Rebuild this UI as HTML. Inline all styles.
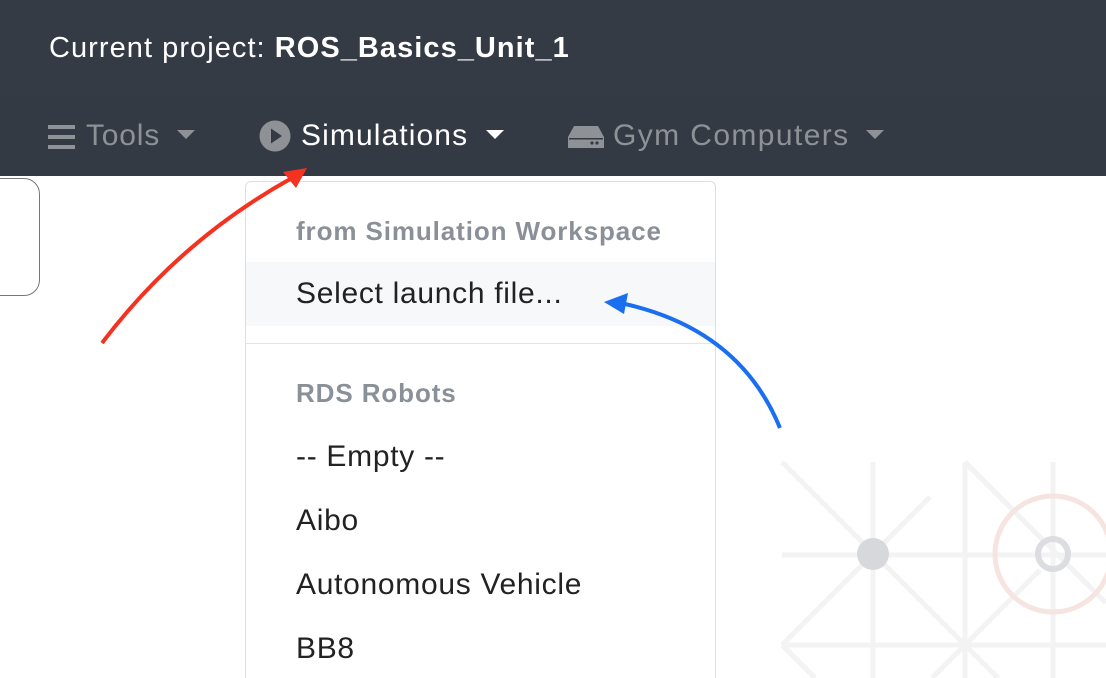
<!DOCTYPE html>
<html><head><style>
html,body{margin:0;width:1106px;height:678px;overflow:hidden}
body{background:#fff;font-family:"Liberation Sans",sans-serif;position:relative}
.top{position:absolute;left:0;top:0;width:1106px;height:96px;background:#353b45}
.nav{position:absolute;left:0;top:96px;width:1106px;height:80px;background:#343a43}
.t{position:absolute;white-space:nowrap}
.dd{position:absolute;left:245px;top:181px;width:469px;height:520px;border:1px solid #dcdfe3;border-radius:6px;background:#fff}
.hd{position:absolute;left:50px;font-size:26px;font-weight:bold;color:#8a9098;letter-spacing:0.9px}
.it{position:absolute;left:50px;font-size:30px;color:#222;letter-spacing:0.7px}
</style></head><body>
<svg style="position:absolute;left:0;top:0" width="1106" height="678">
<g stroke="#f3f3f4" stroke-width="5" fill="none">
<line x1="873" y1="462" x2="873" y2="678"/><line x1="1053" y1="462" x2="1053" y2="678"/><line x1="965" y1="462" x2="965" y2="678"/>
<line x1="782" y1="555" x2="1106" y2="555"/><line x1="782" y1="645" x2="1106" y2="645"/>
<line x1="782" y1="462" x2="965" y2="645"/><line x1="965" y1="462" x2="1106" y2="603"/>
<line x1="782" y1="645" x2="930" y2="497"/><line x1="965" y1="645" x2="1040" y2="570"/>
<line x1="782" y1="645" x2="815" y2="678"/><line x1="965" y1="645" x2="998" y2="678"/><line x1="965" y1="645" x2="932" y2="678"/>
</g>
<circle cx="1053" cy="554" r="58" stroke="#f6e4e1" stroke-width="5" fill="none"/>
<circle cx="873" cy="554" r="16" fill="#d6d8dc"/>
<circle cx="1053" cy="554" r="15" stroke="#dcdde0" stroke-width="6" fill="none"/>
</svg>
<div class="top"></div><div class="nav"></div>
<div class="t" style="left:49px;top:32px;font-size:29px;color:#fff;letter-spacing:1.05px">Current project: <b>ROS_Basics_Unit_1</b></div>
<svg style="position:absolute;left:48px;top:124px" width="28" height="26"><g fill="#8e9297"><rect y="1" width="27" height="4"/><rect y="11" width="27" height="4"/><rect y="21" width="27" height="4"/></g></svg>
<div class="t" style="left:86px;top:119px;font-size:30px;color:#8e9297;letter-spacing:0.8px">Tools</div>
<svg style="position:absolute;left:177px;top:130px" width="18" height="10"><path d="M0 0H18L9 9Z" fill="#8e9297"/></svg>
<svg style="position:absolute;left:259px;top:120px" width="32" height="32"><circle cx="16" cy="16" r="15.5" fill="#8e9297"/><path d="M12 8.5L23 16L12 23.5Z" fill="#343a43"/></svg>
<div class="t" style="left:301px;top:119px;font-size:30px;color:#fff;letter-spacing:1.1px">Simulations</div>
<svg style="position:absolute;left:486px;top:130px" width="18" height="10"><path d="M0 0H18L9 9Z" fill="#fff"/></svg>
<svg style="position:absolute;left:567px;top:124px" width="38" height="26"><path d="M7 2H31L37 13V24H1V13Z" fill="#8e9297"/><rect x="2" y="14" width="34" height="1.5" fill="#343a43"/><circle cx="30" cy="19" r="1.6" fill="#343a43"/><circle cx="25" cy="19" r="1.6" fill="#343a43"/></svg>
<div class="t" style="left:613px;top:119px;font-size:30px;color:#8e9297;letter-spacing:1.4px">Gym Computers</div>
<svg style="position:absolute;left:866px;top:130px" width="18" height="10"><path d="M0 0H18L9 9Z" fill="#8e9297"/></svg>
<div style="position:absolute;left:-30px;top:178px;width:68px;height:116px;border:1.5px solid #777;border-radius:16px;background:#fff"></div>
<div class="dd">
<div class="hd t" style="top:34px">from Simulation Workspace</div>
<div style="position:absolute;left:0;top:80px;width:469px;height:64px;background:#f7f8fa"></div>
<div class="it t" style="top:95px">Select launch file...</div>
<div style="position:absolute;left:0;top:161px;width:469px;height:1px;background:#e3e5e8"></div>
<div class="hd t" style="top:196px">RDS Robots</div>
<div class="it t" style="top:258px">-- Empty --</div>
<div class="it t" style="top:322px">Aibo</div>
<div class="it t" style="top:386px">Autonomous Vehicle</div>
<div class="it t" style="top:450px">BB8</div>
</div>
<svg style="position:absolute;left:0;top:0" width="1106" height="678">
<path d="M102 343Q180 240 292 178" stroke="#f4321f" stroke-width="4" fill="none"/>
<path d="M307 168L283 172L296 188Z" fill="#f4321f"/>
<path d="M780 428Q740 330 625 304" stroke="#1a6ef0" stroke-width="4" fill="none"/>
<path d="M604 302L628 293L624 314Z" fill="#1a6ef0"/>
</svg>
</body></html>
